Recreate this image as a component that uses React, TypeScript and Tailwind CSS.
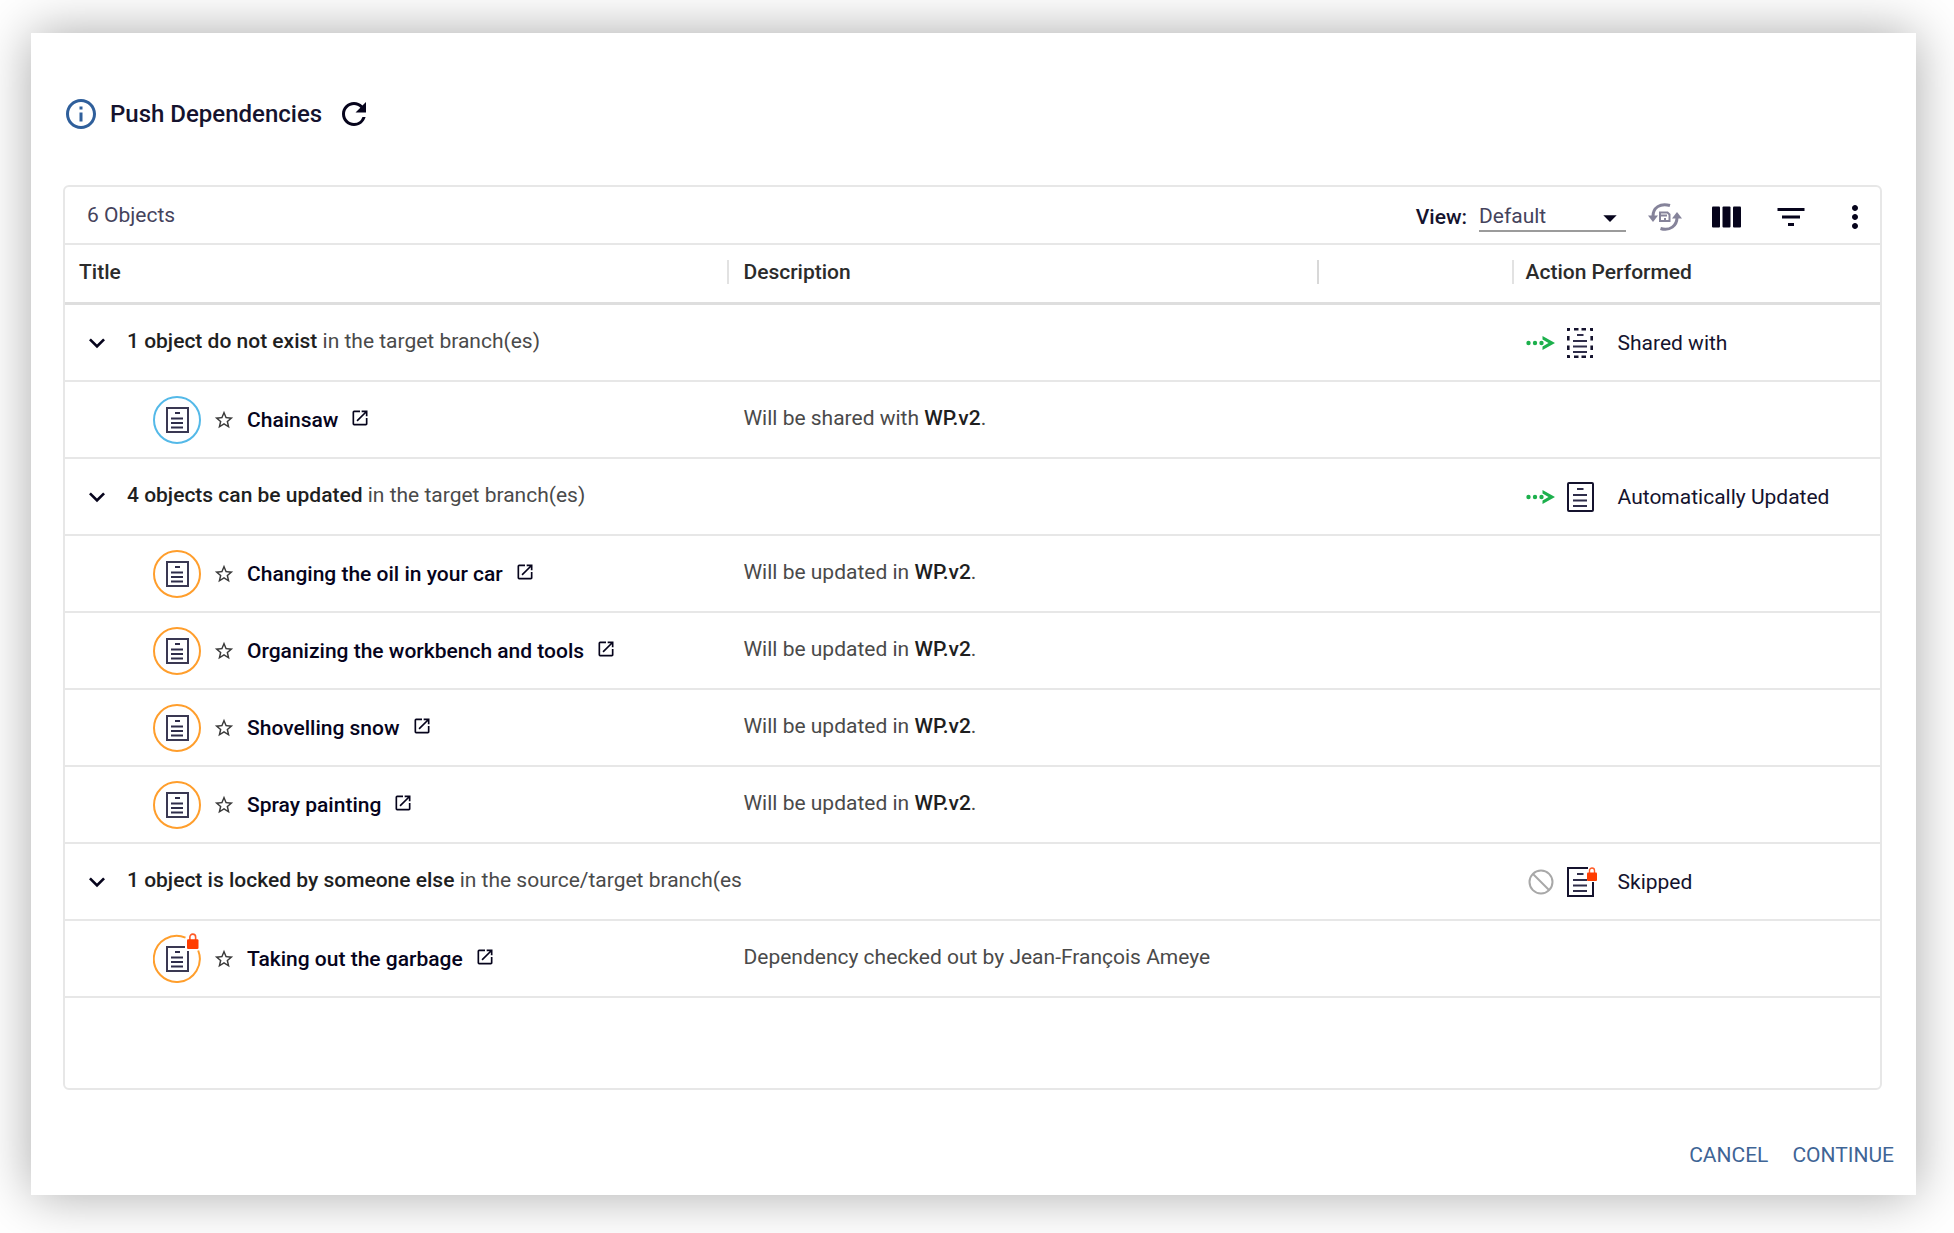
import React, { useState } from 'react';
import {
  MdOutlineInfo,
  MdRefresh,
  MdArrowDropDown,
  MdFilterList,
  MdMoreVert,
  MdKeyboardArrowDown,
  MdStarBorder,
  MdOpenInNew,
} from 'react-icons/md';

type Item = {
  title: string;
  tone: 'new' | 'update';
  locked?: boolean;
  text: string;
  branch?: string;
};

type Group = {
  id: string;
  strong: string;
  rest: string;
  action: 'shared' | 'updated' | 'skipped';
  label: string;
  items: Item[];
};

const groups: Group[] = [
  {
    id: 'missing',
    strong: '1 object do not exist',
    rest: 'in the target branch(es)',
    action: 'shared',
    label: 'Shared with',
    items: [{ title: 'Chainsaw', tone: 'new', text: 'Will be shared with', branch: 'WP.v2' }],
  },
  {
    id: 'update',
    strong: '4 objects can be updated',
    rest: 'in the target branch(es)',
    action: 'updated',
    label: 'Automatically Updated',
    items: [
      { title: 'Changing the oil in your car', tone: 'update', text: 'Will be updated in', branch: 'WP.v2' },
      { title: 'Organizing the workbench and tools', tone: 'update', text: 'Will be updated in', branch: 'WP.v2' },
      { title: 'Shovelling snow', tone: 'update', text: 'Will be updated in', branch: 'WP.v2' },
      { title: 'Spray painting', tone: 'update', text: 'Will be updated in', branch: 'WP.v2' },
    ],
  },
  {
    id: 'locked',
    strong: '1 object is locked by someone else',
    rest: 'in the source/target branch(es',
    action: 'skipped',
    label: 'Skipped',
    items: [
      {
        title: 'Taking out the garbage',
        tone: 'update',
        locked: true,
        text: 'Dependency checked out by Jean-François Ameye',
      },
    ],
  },
];

const Lock = () => (
  <g>
    <path d="M2.500 6V3.500a2.500 2.500 0 0 1 5 0V6" fill="none" stroke="#ff5a26" strokeWidth="1.400" />
    <rect x="0" y="5.500" width="10" height="8.500" rx="1" fill="#ff3d00" />
  </g>
);

const DocIcon = ({ variant }: { variant: Group['action'] }) => (
  <svg width="32" height="32" viewBox="0 0 32 32" fill="none" aria-hidden="true">
    {variant === 'shared' && (
      <g stroke="#15132e" strokeWidth="2.600">
        <path d="M1 2.300h3M8 2.300h4.500M15.500 2.300H20M24 2.300h3" />
        <path d="M1 29.700h3M8 29.700h4.500M15.500 29.700H20M24 29.700h3" />
        <path d="M2.300 1v3M2.300 9v4.500M2.300 18.500V23M2.300 28v3" />
        <path d="M25.700 1v3M25.700 9v4.500M25.700 18.500V23M25.700 28v3" />
      </g>
    )}
    {variant === 'updated' && <rect x="2" y="2" width="25" height="28" rx="1" stroke="#15132e" strokeWidth="2" />}
    {variant === 'skipped' && <path d="M22 2H2v28h25V16" stroke="#15132e" strokeWidth="2" />}
    <path d="M11 8h6.500M7 14h14M7 19.500h14M7 25h14" stroke="#2f2d4a" strokeWidth="2.200" />
    {variant === 'skipped' && (
      <g transform="translate(21 1)">
        <Lock />
      </g>
    )}
  </svg>
);

const DashedArrow = () => (
  <svg width="29" height="16" viewBox="0 0 29 16" fill="#1cb04c" aria-hidden="true">
    <circle cx="2.500" cy="8" r="2.200" />
    <circle cx="9" cy="8" r="2.200" />
    <circle cx="15.500" cy="8" r="2.200" />
    <path d="M16.500 1L29 8l-12.500 7v-3.500L22.500 8l-6-3.500z" />
  </svg>
);

const BlockedIcon = () => (
  <svg width="29" height="28" viewBox="0 0 29 28" fill="none" stroke="#a8a8a8" strokeWidth="2" aria-hidden="true">
    <circle cx="15" cy="14" r="11.500" />
    <path d="M7 6l16 16" />
  </svg>
);

const ObjectBadge = ({ tone, locked }: { tone: Item['tone']; locked?: boolean }) => (
  <svg width="48" height="56" viewBox="0 0 48 56" fill="none" aria-hidden="true" className="shrink-0">
    {locked ? (
      <path d="M32.500 6.600A23 23 0 1 0 45.200 19.500" stroke="#ff9e2c" strokeWidth="2" />
    ) : (
      <circle cx="24" cy="28" r="23" stroke={tone === 'new' ? '#54b9e8' : '#ff9e2c'} strokeWidth="2" />
    )}
    {locked ? (
      <path d="M32 16H14v24h21V20" stroke="#3a3852" strokeWidth="2" />
    ) : (
      <rect x="14" y="16" width="21" height="24" stroke="#3a3852" strokeWidth="2" />
    )}
    <path d="M22 21h5M18 26.500h12M18 31h12M18 35.500h12" stroke="#2f2d4a" strokeWidth="2" />
    {locked && (
      <g transform="translate(34 2) scale(1.150)">
        <Lock />
      </g>
    )}
  </svg>
);

const AutoSaveIcon = () => (
  <svg width="34" height="28" viewBox="0 0 34 28" fill="none" aria-hidden="true">
    <path d="M22 2.500C12-.5 5 5 5 13" stroke="#85839a" strokeWidth="3" />
    <path d="M0 12.500h10L5 19z" fill="#85839a" />
    <path d="M12.500 25.500c9.500 3 16.500-3 16.500-11" stroke="#85839a" strokeWidth="3" />
    <path d="M24 15.500h10L29 9z" fill="#85839a" />
    <path d="M12 9.500h7.500l2 2v6.500H12z" stroke="#85839a" strokeWidth="2" />
    <path d="M13 12.500h6M17 15v2" stroke="#85839a" strokeWidth="2" />
  </svg>
);

const ColumnsIcon = () => (
  <svg width="29" height="24" viewBox="0 0 29 24" fill="#06041c" aria-hidden="true">
    <rect x="0" y="1.500" width="8" height="21" rx="1" />
    <rect x="10.500" y="1.500" width="8" height="21" rx="1" />
    <rect x="21" y="1.500" width="8" height="21" rx="1" />
  </svg>
);

const ActionCell = ({ action, label }: { action: Group['action']; label: string }) => (
  <div className="flex items-center">
    <span className="flex w-10 shrink-0 items-center">
      {action === 'skipped' ? <BlockedIcon /> : <DashedArrow />}
    </span>
    <DocIcon variant={action} />
    <span className="pl-5 text-[#15132e]">{label}</span>
  </div>
);

const App = () => {
  const [closed, setClosed] = useState<string[]>([]);
  const [view, setView] = useState('Default');

  const toggle = (id: string) =>
    setClosed(closed.includes(id) ? closed.filter((c) => c !== id) : [...closed, id]);

  return (
    <div className="min-h-screen flex bg-white pt-[33px] pr-[38px] pb-[38px] pl-[31px] font-['Roboto',sans-serif] text-[21px] leading-6">
      <main className="flex flex-1 min-w-0 flex-col bg-white pl-8 pr-[34px] pt-[63px] shadow-[0_0_50px_rgba(0,0,0,0.34)]">
        {/* Heading */}
        <header className="flex h-9 items-center text-[#15132e]">
          <MdOutlineInfo className="size-9 text-[#2f5f9b]" />
          <h1 className="pl-[11px] text-[24px] font-medium">Push Dependencies</h1>
          <button type="button" aria-label="Refresh" className="ml-3.5 text-[#06041c]">
            <MdRefresh className="size-9" />
          </button>
        </header>

        {/* Objects panel */}
        <section className="mt-[53px] flex flex-1 flex-col rounded-md border-2 border-[#e7e7e7]">
          <div className="flex h-[58px] items-center border-b-2 border-[#e7e7e7] pl-[22px] pr-[7px]">
            <p className="flex-1 text-[#45435c]">6 Objects</p>
            <div className="flex items-center pt-1">
              <label htmlFor="view" className="pr-3 font-medium text-[#15132e]">View:</label>
              <div className="relative border-b-2 border-[#9b9b9b]">
                <select
                  id="view"
                  value={view}
                  onChange={(e) => setView(e.target.value)}
                  className="h-7 w-[147px] appearance-none bg-transparent text-[#45435c] outline-none"
                >
                  <option>Default</option>
                </select>
                <MdArrowDropDown className="pointer-events-none absolute right-0 top-0 size-8 text-[#06041c]" />
              </div>
              <div className="flex items-center pl-[22px] text-[#06041c]">
                <button type="button" aria-label="Auto save view"><AutoSaveIcon /></button>
                <button type="button" aria-label="Columns" className="ml-[30px]"><ColumnsIcon /></button>
                <button type="button" aria-label="Filter" className="ml-8"><MdFilterList className="size-9" /></button>
                <button type="button" aria-label="More" className="ml-7"><MdMoreVert className="size-9" /></button>
              </div>
            </div>
          </div>

          <table className="w-full table-fixed border-separate border-spacing-0 text-left">
            <colgroup>
              <col className="w-[36.5%]" />
              <col className="w-[32.5%]" />
              <col className="w-[10.7%]" />
              <col />
            </colgroup>
            <thead>
              <tr className="h-[60px] text-[#2b2b2b]">
                <th className="border-b-3 border-[#dedede] p-0 pb-1 pl-3.5 font-medium">Title</th>
                <th className="border-b-3 border-[#dedede] p-0 pb-1 font-medium">
                  <div className="border-l-2 border-[#e2e2e2] pl-3.5">Description</div>
                </th>
                <th className="border-b-3 border-[#dedede] p-0 pb-1">
                  <div className="h-6 border-l-2 border-[#d8d8d8]" />
                </th>
                <th className="border-b-3 border-[#dedede] p-0 pb-1 font-medium">
                  <div className="border-l-2 border-[#e2e2e2] pl-3">Action Performed</div>
                </th>
              </tr>
            </thead>
            <tbody>
              {groups.map((group) => (
                <React.Fragment key={group.id}>
                  <tr className="h-[77px]">
                    <td className="border-b-2 border-[#e7e7e7] pl-4">
                      <div className="flex items-center whitespace-nowrap">
                        <button
                          type="button"
                          aria-label={group.strong}
                          aria-expanded={!closed.includes(group.id)}
                          onClick={() => toggle(group.id)}
                          className="mr-3.5 shrink-0 text-[#06041c]"
                        >
                          <MdKeyboardArrowDown className="size-8" />
                        </button>
                        <p className="pb-1 text-[#4a4a4a]">
                          <strong className="font-medium text-[#1f1f1f]">{group.strong}</strong> {group.rest}
                        </p>
                      </div>
                    </td>
                    <td className="border-b-2 border-[#e7e7e7]" />
                    <td className="border-b-2 border-[#e7e7e7]" />
                    <td className="border-b-2 border-[#e7e7e7] pl-3.5">
                      <ActionCell action={group.action} label={group.label} />
                    </td>
                  </tr>
                  {!closed.includes(group.id) &&
                    group.items.map((item) => (
                      <tr key={item.title} className="h-[77px]">
                        <td className="border-b-2 border-[#e7e7e7] pl-[88px]">
                          <div className="flex items-center">
                            <ObjectBadge tone={item.tone} locked={item.locked} />
                            <button type="button" aria-label="Add to favorites" className="ml-3 text-[#3a3a3a]">
                              <MdStarBorder className="size-[22px]" />
                            </button>
                            <a href="#" className="flex items-center pl-3 font-medium text-[#06041c]">
                              {item.title}
                              <MdOpenInNew className="mb-1 ml-3 size-5" />
                            </a>
                          </div>
                        </td>
                        <td className="border-b-2 border-[#e7e7e7] pb-1 pl-4 text-[#4a4a4a]">
                          {item.text}
                          {item.branch && (
                            <>
                              {' '}
                              <strong className="font-medium text-[#1f1f1f]">{item.branch}</strong>.
                            </>
                          )}
                        </td>
                        <td className="border-b-2 border-[#e7e7e7]" />
                        <td className="border-b-2 border-[#e7e7e7]" />
                      </tr>
                    ))}
                </React.Fragment>
              ))}
            </tbody>
          </table>
        </section>

        {/* Footer actions */}
        <footer className="-mr-3 flex h-[105px] items-center justify-end gap-6 pt-7 pb-1 text-[#3f6596]">
          <button type="button">CANCEL</button>
          <button type="button">CONTINUE</button>
        </footer>
      </main>
    </div>
  );
};

export default App;
